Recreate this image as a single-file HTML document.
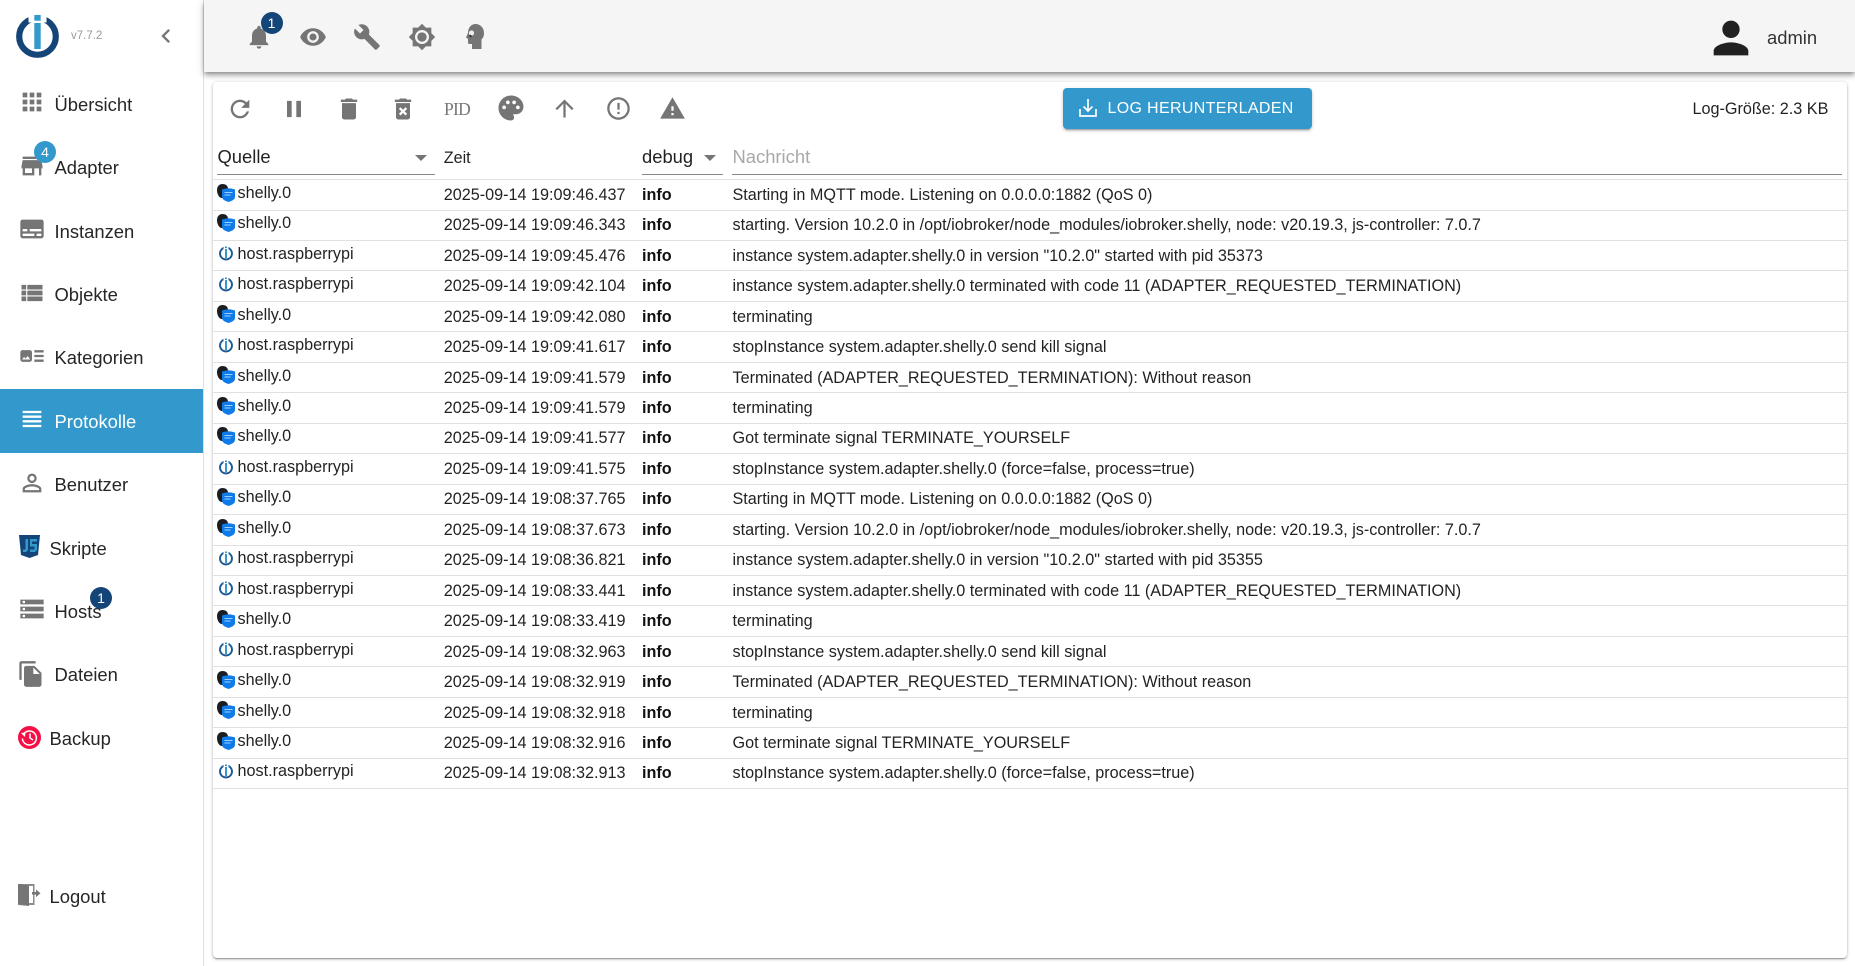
<!DOCTYPE html>
<html><head><meta charset="utf-8"><title>ioBroker</title>
<style>
html,body{margin:0;padding:0;width:1855px;height:966px;overflow:hidden;background:#fff;font-family:"Liberation Sans",Arial,sans-serif;color:rgba(0,0,0,.87)}
.a{position:absolute}
svg{position:absolute;display:block;overflow:visible}
.g{fill:#757575}
.n{position:absolute;font-size:18.4px;line-height:22px;white-space:nowrap;color:#262626;left:54.5px}
.b{position:absolute;border-radius:50%;width:22px;height:22px;color:#fff;text-align:center;font-size:14px;line-height:22px}
.r{position:absolute;left:213px;width:1634px;height:30px;border-bottom:1px solid #e0e0e0;font-size:16.2px;line-height:20px;white-space:nowrap}
.r span{position:absolute;top:5.4px}
.r .s{left:24.5px;top:3.4px}
.r .t{left:230.7px}
.r .l{left:429px;font-weight:bold;color:#111}
.r .m{left:519.5px}
.r svg{left:4px;top:4px;width:18px;height:18px}
.u{position:absolute;height:1px;background:#8a8a8a;top:174px}
</style></head><body>
<svg width="0" height="0" style="position:absolute"><defs>
<symbol id="sh" viewBox="0 0 18 18"><path d="M5.5 0C9 0 11 2 11 5v9H5C2 14 0 10 0 6S2.500 0 5.500 0z" fill="#1a1d22"/><path d="M5 5.500Q11.500 3 18 5.500V13q0 3-6.500 5Q5 16 5 13z" fill="#0f7be8"/><path d="M7.500 8.500h8M7.500 11h6" stroke="#9fd0f8" stroke-width=".9"/></symbol>
<symbol id="io" viewBox="0 0 18 18"><circle cx="9" cy="9.500" r="6" fill="none" stroke="#1d5a94" stroke-width="1.900"/><rect x="6.500" y="1.500" width="5" height="3.800" fill="#fff"/><rect x="8" y="2.500" width="2" height="1.600" fill="#39c"/><rect x="8" y="5" width="2" height="9" fill="#39c"/></symbol>
</defs></svg>

<!-- sidebar -->
<div class="a" style="left:203px;top:0;width:1px;height:966px;background:#e0e0e0"></div>
<svg style="left:16px;top:15px" width="43" height="43" viewBox="0 0 43 43"><circle cx="21.500" cy="21.500" r="18.300" fill="none" stroke="#144578" stroke-width="6.200"/><rect x="12.500" y="0" width="18" height="7.500" fill="#fff"/><rect x="18.300" y="0" width="6.400" height="5.700" fill="#39c"/><rect x="18.300" y="8" width="6.400" height="26" fill="#39c"/></svg>
<div class="a" style="left:71px;top:29px;font-size:11.5px;line-height:14px;color:#9a9a9a">v7.7.2</div>
<svg class="g" style="left:152px;top:22px" width="28" height="28" viewBox="0 0 24 24"><path d="M15.410 7.410 14 6l-6 6 6 6 1.410-1.410L10.830 12z"/></svg>

<div class="a" style="left:0;top:389px;width:203px;height:64px;background:#39c"></div>

<svg class="g" style="left:17.500px;top:88.300px" width="28" height="28" viewBox="0 0 24 24"><path d="M4 8h4V4H4v4zm6 12h4v-4h-4v4zm-6 0h4v-4H4v4zm0-6h4v-4H4v4zm6 0h4v-4h-4v4zm6-10v4h4V4h-4zm-6 4h4V4h-4v4zm6 6h4v-4h-4v4zm0 6h4v-4h-4v4z"/></svg>
<div class="n" style="top:94px">Übersicht</div>
<svg class="g" style="left:17.500px;top:151.700px" width="28" height="28" viewBox="0 0 24 24"><path d="M20 4H4v2h16V4zm1 10v-2l-1-5H4l-1 5v2h1v6h10v-6h4v6h2v-6h1zm-9 4H6v-4h6v4z"/></svg>
<div class="b" style="left:34px;top:140.500px;background:#39c">4</div>
<div class="n" style="top:156.500px">Adapter</div>
<svg class="g" style="left:17.500px;top:215px" width="28" height="28" viewBox="0 0 24 24"><path d="M20 4H4c-1.100 0-2 .9-2 2v12c0 1.100.9 2 2 2h16c1.100 0 2-.9 2-2V6c0-1.100-.9-2-2-2zM4 12h4v2H4v-2zm10 6H4v-2h10v2zm6 0h-4v-2h4v2zm0-4H10v-2h10v2z"/></svg>
<div class="n" style="top:221px">Instanzen</div>
<svg class="g" style="left:17.500px;top:278.500px" width="28" height="28" viewBox="0 0 24 24"><path d="M3 14h4v-4H3v4zm0 5h4v-4H3v4zM3 9h4V5H3v4zm5 5h13v-4H8v4zm0 5h13v-4H8v4zM8 5v4h13V5H8z"/></svg>
<div class="n" style="top:283.500px">Objekte</div>
<svg class="g" style="left:17.500px;top:342px" width="28" height="28" viewBox="0 0 24 24"><path d="M22 13h-8v-2h8v2zm0-6h-8v2h8V7zm-8 10h8v-2h-8v2zm-2-8v6c0 1.100-.9 2-2 2H4c-1.100 0-2-.9-2-2V9c0-1.100.9-2 2-2h6c1.100 0 2 .9 2 2zm-1.500 6l-2.250-3-1.750 2.260-1.250-1.510L3.500 15h7z"/></svg>
<div class="n" style="top:347px">Kategorien</div>
<svg style="left:17.500px;top:405.200px;fill:#fff" width="28" height="28" viewBox="0 0 24 24"><path d="M4 15h16v-2H4v2zm0 4h16v-2H4v2zm0-8h16V9H4v2zm0-6v2h16V5H4z"/></svg>
<div class="n" style="top:410.500px;color:#fff">Protokolle</div>
<svg class="g" style="left:17.500px;top:468.600px" width="28" height="28" viewBox="0 0 24 24"><path d="M12 5.900c1.160 0 2.100.94 2.100 2.100s-.94 2.100-2.100 2.100S9.900 9.160 9.900 8s.94-2.100 2.100-2.100m0 9c2.970 0 6.100 1.460 6.100 2.100v1.100H5.900V17c0-.64 3.130-2.100 6.100-2.100M12 4C9.790 4 8 5.790 8 8s1.790 4 4 4 4-1.790 4-4-1.790-4-4-4zm0 9c-2.670 0-8 1.340-8 4v3h16v-3c0-2.660-5.330-4-8-4z"/></svg>
<div class="n" style="top:474px">Benutzer</div>
<svg style="left:19px;top:535px" width="21" height="23" viewBox="0 0 21 23"><path d="M0 0h21l-2 20-8.500 3L2 20z" fill="#144578"/><path d="M9 4v11l-2 2H4v-2.500h2.500V4zM18 4v2.500h-5V9h5v6l-2 2h-5v-2.500h4.500V11.500H11V4z" fill="#39c"/></svg>
<div class="n" style="left:49.500px;top:537.500px">Skripte</div>
<svg class="g" style="left:17.500px;top:595.300px" width="28" height="28" viewBox="0 0 24 24"><path d="M2 20h20v-4H2v4zm2-3h2v2H4v-2zM2 4v4h20V4H2zm4 3H4V5h2v2zm-4 7h20v-4H2v4zm2-3h2v2H4v-2z"/></svg>
<div class="n" style="top:601px">Hosts</div>
<div class="b" style="left:90px;top:587px;background:#144578">1</div>
<svg class="g" style="left:17px;top:659.500px" width="28" height="28" viewBox="0 0 24 24"><path d="M16 1H4c-1.100 0-2 .9-2 2v14h2V3h12V1zm-1 4 6 6v10c0 1.100-.9 2-2 2H7.990C6.890 23 6 22.100 6 21l.01-14c0-1.100.89-2 1.990-2h7zm-1 7h5.500L14 6.500V12z"/></svg>
<div class="n" style="top:664px">Dateien</div>
<svg style="left:18px;top:726px" width="23" height="23" viewBox="0 0 23 23"><circle cx="11.500" cy="11.500" r="11.500" fill="#f50f45"/><path d="M6 7.500a7 7 0 1 1-1.600 5" fill="none" stroke="#fff" stroke-width="1.500"/><path d="M3 7l4.500-.5L7 11z" fill="#fff"/><path d="M12 7.500v4.500l3 2" fill="none" stroke="#fff" stroke-width="1.500"/></svg>
<div class="n" style="left:49.500px;top:727.500px">Backup</div>
<svg style="left:18px;top:884px" width="23" height="23" viewBox="0 0 23 23"><path d="M0 0h16.500v21H11v1l-11-1z" fill="#8a8a8a"/><path d="M0 0l11 1.500V22L0 20z" fill="#757575"/><rect x="11" y="2" width="4" height="17" fill="#fff"/><path d="M14 8h4V5.500l4.500 3.800-4.500 3.800V10.500h-4z" fill="#757575"/></svg>
<div class="n" style="left:49.500px;top:885.500px">Logout</div>

<!-- top bar -->
<div class="a" style="left:204px;top:0;width:1651px;height:72px;background:#f5f5f5;box-shadow:0 2px 4px -1px rgba(0,0,0,.3),0 4px 5px 0 rgba(0,0,0,.2),0 1px 10px 0 rgba(0,0,0,.12)"></div>
<svg class="g" style="left:244.500px;top:22.500px" width="28" height="28" viewBox="0 0 24 24"><path d="M12 22c1.100 0 2-.9 2-2h-4c0 1.100.89 2 2 2zm6-6v-5c0-3.070-1.640-5.640-4.500-6.320V4c0-.83-.67-1.500-1.500-1.500s-1.500.67-1.500 1.500v.68C7.630 5.360 6 7.920 6 11v5l-2 2v1h16v-1l-2-2z"/></svg>
<div class="b" style="left:260.500px;top:12px;background:#144578">1</div>
<svg class="g" style="left:298.500px;top:22.500px" width="28" height="28" viewBox="0 0 24 24"><path d="M12 4.500C7 4.500 2.730 7.610 1 12c1.730 4.390 6 7.500 11 7.500s9.270-3.110 11-7.500c-1.730-4.390-6-7.500-11-7.500zM12 17c-2.760 0-5-2.240-5-5s2.240-5 5-5 5 2.240 5 5-2.240 5-5 5zm0-8c-1.660 0-3 1.340-3 3s1.340 3 3 3 3-1.340 3-3-1.340-3-3-3z"/></svg>
<svg class="g" style="left:352.500px;top:22.500px" width="28" height="28" viewBox="0 0 24 24"><path d="M22.700 19l-9.100-9.100c.9-2.300.4-5-1.500-6.900-2-2-5-2.400-7.400-1.300L9 6 6 9 1.600 4.700C.4 7.100.9 10.100 2.900 12.100c1.900 1.900 4.600 2.400 6.900 1.500l9.100 9.100c.4.4 1 .4 1.400 0l2.300-2.300c.5-.4.5-1.100.1-1.400z"/></svg>
<svg class="g" style="left:407.500px;top:22.500px" width="28" height="28" viewBox="0 0 24 24"><path d="M20 15.310 23.310 12 20 8.690V4h-4.690L12 .69 8.690 4H4v4.690L.69 12 4 15.310V20h4.690L12 23.310 15.310 20H20v-4.690zM12 18c-3.310 0-6-2.690-6-6s2.690-6 6-6 6 2.690 6 6-2.690 6-6 6zm0-10c-2.210 0-4 1.790-4 4s1.790 4 4 4 4-1.790 4-4-1.790-4-4-4z"/></svg>
<svg style="left:466px;top:24px" width="18" height="25" viewBox="0 0 18 25"><path d="M9.500 0C14 0 18 3.500 18 9c0 3-.8 5-2.500 6.500V25H6v-5H3.500Q2 20 2 18.500V15L0 13.500 2 9C2 4 5 0 9.500 0z" fill="#757575"/><circle cx="5.500" cy="9" r="2.600" fill="#eee"/><circle cx="4.500" cy="12" r="1.100" fill="#222"/></svg>
<svg style="left:1705px;top:11.500px;fill:#212121" width="52" height="52" viewBox="0 0 24 24"><path d="M12 12c2.210 0 4-1.790 4-4s-1.790-4-4-4-4 1.790-4 4 1.790 4 4 4zm0 2c-2.670 0-8 1.340-8 4v2h16v-2c0-2.660-5.330-4-8-4z"/></svg>
<div class="a" style="left:1767px;top:27px;font-size:18.4px;line-height:22px;color:#333">admin</div>

<!-- panel -->
<div class="a" style="left:213px;top:82px;width:1634px;height:876px;background:#fff;border-radius:4px;box-shadow:0 1px 3px 0 rgba(0,0,0,.3),0 1px 1px 0 rgba(0,0,0,.14),0 2px 1px -1px rgba(0,0,0,.12)"></div>

<svg class="g" style="left:225.500px;top:94.500px" width="28" height="28" viewBox="0 0 24 24"><path d="M17.650 6.350C16.200 4.900 14.210 4 12 4c-4.420 0-7.990 3.580-7.990 8s3.570 8 7.990 8c3.730 0 6.840-2.550 7.730-6h-2.080c-.82 2.330-3.040 4-5.650 4-3.310 0-6-2.690-6-6s2.690-6 6-6c1.660 0 3.140.69 4.220 1.780L13 11h7V4l-2.350 2.350z"/></svg>
<svg class="g" style="left:280.400px;top:94.500px" width="28" height="28" viewBox="0 0 24 24"><path d="M6 19h4V5H6v14zm8-14v14h4V5h-4z"/></svg>
<svg class="g" style="left:334.600px;top:94.500px" width="28" height="28" viewBox="0 0 24 24"><path d="M6 19c0 1.100.9 2 2 2h8c1.100 0 2-.9 2-2V7H6v12zM19 4h-3.500l-1-1h-5l-1 1H5v2h14V4z"/></svg>
<svg class="g" style="left:388.500px;top:94.500px" width="28" height="28" viewBox="0 0 24 24"><path d="M6 19c0 1.100.9 2 2 2h8c1.100 0 2-.9 2-2V7H6v12zm2.460-7.120 1.410-1.410L12 12.590l2.120-2.120 1.410 1.410L13.410 14l2.120 2.120-1.410 1.410L12 15.410l-2.120 2.120-1.410-1.410L10.590 14l-2.130-2.120zM15.500 4l-1-1h-5l-1 1H5v2h14V4z"/></svg>
<div class="a" style="left:444px;top:99px;font-family:'Liberation Serif',serif;font-size:17.500px;letter-spacing:-.7px;line-height:20px;color:#777">PID</div>
<svg class="g" style="left:495.500px;top:93px" width="30" height="30" viewBox="0 0 24 24"><path d="M12 2C6.490 2 2 6.490 2 12s4.490 10 10 10c1.380 0 2.500-1.120 2.500-2.500 0-.61-.23-1.200-.64-1.670-.08-.1-.13-.21-.13-.33 0-.28.22-.5.5-.5H16c3.310 0 6-2.690 6-6 0-4.960-4.490-9-10-9zm5.500 11c-.83 0-1.500-.67-1.500-1.500s.67-1.500 1.500-1.500 1.500.67 1.500 1.500-.67 1.500-1.500 1.500zm-3-4c-.83 0-1.500-.67-1.500-1.500S13.670 6 14.500 6s1.500.67 1.500 1.500S15.330 9 14.500 9zM5 11.500c0-.83.67-1.500 1.500-1.500s1.500.67 1.500 1.500S7.330 13 6.500 13 5 12.330 5 11.500zm6-4c0 .83-.67 1.500-1.500 1.500S8 8.330 8 7.500 8.670 6 9.500 6s1.500.67 1.500 1.500z"/></svg>
<svg class="g" style="left:551px;top:94.500px" width="27" height="27" viewBox="0 0 24 24"><path d="M4 12l1.410 1.410L11 7.830V20h2V7.830l5.580 5.590L20 12l-8-8-8 8z"/></svg>
<svg class="g" style="left:604.800px;top:94.500px" width="27" height="27" viewBox="0 0 24 24"><path d="M11 15h2v2h-2zm0-8h2v6h-2zm.99-5C6.470 2 2 6.480 2 12s4.470 10 9.990 10C17.520 22 22 17.520 22 12S17.520 2 11.990 2zM12 20c-4.420 0-8-3.580-8-8s3.580-8 8-8 8 3.580 8 8-3.580 8-8 8z"/></svg>
<svg class="g" style="left:659.200px;top:95px" width="27" height="27" viewBox="0 0 24 24"><path d="M1 21h22L12 2 1 21zm12-3h-2v-2h2v2zm0-4h-2v-4h2v4z"/></svg>

<div class="a" style="left:1063px;top:88px;width:249px;height:41px;background:#39c;border-radius:4px;box-shadow:0 3px 1px -2px rgba(0,0,0,.2),0 2px 2px 0 rgba(0,0,0,.14),0 1px 5px 0 rgba(0,0,0,.12)"></div>
<svg style="left:1079px;top:99px" width="18" height="18" viewBox="0 0 18 18"><path d="M1 10v7h16v-7" fill="none" stroke="#fff" stroke-width="1.700"/><path d="M9 0v12M4.500 7.500 9 12l4.500-4.500" fill="none" stroke="#fff" stroke-width="1.700"/></svg>
<div class="a" style="left:1107.500px;top:99px;font-size:16px;line-height:20px;color:#fff;white-space:nowrap;letter-spacing:.33px">LOG HERUNTERLADEN</div>
<div class="a" style="left:1692.500px;top:99px;font-size:16.200px;line-height:20px;white-space:nowrap">Log-Größe: 2.3 KB</div>

<!-- header -->
<div class="a" style="left:217.500px;top:146px;font-size:18.400px;line-height:22px">Quelle</div>
<div class="u" style="left:217px;width:218px"></div>
<div class="a" style="left:415px;top:155px;width:0;height:0;border-left:6px solid transparent;border-right:6px solid transparent;border-top:6px solid #757575"></div>
<div class="a" style="left:443.700px;top:148px;font-size:16.200px;line-height:20px">Zeit</div>
<div class="a" style="left:642px;top:146px;font-size:18.400px;line-height:22px">debug</div>
<div class="u" style="left:642px;width:81px"></div>
<div class="a" style="left:703.500px;top:155px;width:0;height:0;border-left:6px solid transparent;border-right:6px solid transparent;border-top:6px solid #757575"></div>
<div class="a" style="left:732.500px;top:146px;font-size:18.400px;line-height:22px;color:#a8a8a8">Nachricht</div>
<div class="u" style="left:732px;width:1110px"></div>
<div class="a" style="left:213px;top:179px;width:1634px;height:1px;background:#e0e0e0"></div>

<!-- rows -->
<div class="r" style="top:179.500px"><svg><use href="#sh"/></svg><span class="s">shelly.0</span><span class="t">2025-09-14 19:09:46.437</span><span class="l">info</span><span class="m">Starting in MQTT mode. Listening on 0.0.0.0:1882 (QoS 0)</span></div>
<div class="r" style="top:210px"><svg><use href="#sh"/></svg><span class="s">shelly.0</span><span class="t">2025-09-14 19:09:46.343</span><span class="l">info</span><span class="m">starting. Version 10.2.0 in /opt/iobroker/node_modules/iobroker.shelly, node: v20.19.3, js-controller: 7.0.7</span></div>
<div class="r" style="top:240.400px"><svg><use href="#io"/></svg><span class="s">host.raspberrypi</span><span class="t">2025-09-14 19:09:45.476</span><span class="l">info</span><span class="m">instance system.adapter.shelly.0 in version "10.2.0" started with pid 35373</span></div>
<div class="r" style="top:270.900px"><svg><use href="#io"/></svg><span class="s">host.raspberrypi</span><span class="t">2025-09-14 19:09:42.104</span><span class="l">info</span><span class="m">instance system.adapter.shelly.0 terminated with code 11 (ADAPTER_REQUESTED_TERMINATION)</span></div>
<div class="r" style="top:301.300px"><svg><use href="#sh"/></svg><span class="s">shelly.0</span><span class="t">2025-09-14 19:09:42.080</span><span class="l">info</span><span class="m">terminating</span></div>
<div class="r" style="top:331.800px"><svg><use href="#io"/></svg><span class="s">host.raspberrypi</span><span class="t">2025-09-14 19:09:41.617</span><span class="l">info</span><span class="m">stopInstance system.adapter.shelly.0 send kill signal</span></div>
<div class="r" style="top:362.200px"><svg><use href="#sh"/></svg><span class="s">shelly.0</span><span class="t">2025-09-14 19:09:41.579</span><span class="l">info</span><span class="m">Terminated (ADAPTER_REQUESTED_TERMINATION): Without reason</span></div>
<div class="r" style="top:392.700px"><svg><use href="#sh"/></svg><span class="s">shelly.0</span><span class="t">2025-09-14 19:09:41.579</span><span class="l">info</span><span class="m">terminating</span></div>
<div class="r" style="top:423.100px"><svg><use href="#sh"/></svg><span class="s">shelly.0</span><span class="t">2025-09-14 19:09:41.577</span><span class="l">info</span><span class="m">Got terminate signal TERMINATE_YOURSELF</span></div>
<div class="r" style="top:453.600px"><svg><use href="#io"/></svg><span class="s">host.raspberrypi</span><span class="t">2025-09-14 19:09:41.575</span><span class="l">info</span><span class="m">stopInstance system.adapter.shelly.0 (force=false, process=true)</span></div>
<div class="r" style="top:484px"><svg><use href="#sh"/></svg><span class="s">shelly.0</span><span class="t">2025-09-14 19:08:37.765</span><span class="l">info</span><span class="m">Starting in MQTT mode. Listening on 0.0.0.0:1882 (QoS 0)</span></div>
<div class="r" style="top:514.500px"><svg><use href="#sh"/></svg><span class="s">shelly.0</span><span class="t">2025-09-14 19:08:37.673</span><span class="l">info</span><span class="m">starting. Version 10.2.0 in /opt/iobroker/node_modules/iobroker.shelly, node: v20.19.3, js-controller: 7.0.7</span></div>
<div class="r" style="top:544.900px"><svg><use href="#io"/></svg><span class="s">host.raspberrypi</span><span class="t">2025-09-14 19:08:36.821</span><span class="l">info</span><span class="m">instance system.adapter.shelly.0 in version "10.2.0" started with pid 35355</span></div>
<div class="r" style="top:575.400px"><svg><use href="#io"/></svg><span class="s">host.raspberrypi</span><span class="t">2025-09-14 19:08:33.441</span><span class="l">info</span><span class="m">instance system.adapter.shelly.0 terminated with code 11 (ADAPTER_REQUESTED_TERMINATION)</span></div>
<div class="r" style="top:605.800px"><svg><use href="#sh"/></svg><span class="s">shelly.0</span><span class="t">2025-09-14 19:08:33.419</span><span class="l">info</span><span class="m">terminating</span></div>
<div class="r" style="top:636.300px"><svg><use href="#io"/></svg><span class="s">host.raspberrypi</span><span class="t">2025-09-14 19:08:32.963</span><span class="l">info</span><span class="m">stopInstance system.adapter.shelly.0 send kill signal</span></div>
<div class="r" style="top:666.700px"><svg><use href="#sh"/></svg><span class="s">shelly.0</span><span class="t">2025-09-14 19:08:32.919</span><span class="l">info</span><span class="m">Terminated (ADAPTER_REQUESTED_TERMINATION): Without reason</span></div>
<div class="r" style="top:697.200px"><svg><use href="#sh"/></svg><span class="s">shelly.0</span><span class="t">2025-09-14 19:08:32.918</span><span class="l">info</span><span class="m">terminating</span></div>
<div class="r" style="top:727.600px"><svg><use href="#sh"/></svg><span class="s">shelly.0</span><span class="t">2025-09-14 19:08:32.916</span><span class="l">info</span><span class="m">Got terminate signal TERMINATE_YOURSELF</span></div>
<div class="r" style="top:758.100px"><svg><use href="#io"/></svg><span class="s">host.raspberrypi</span><span class="t">2025-09-14 19:08:32.913</span><span class="l">info</span><span class="m">stopInstance system.adapter.shelly.0 (force=false, process=true)</span></div>
</body></html>
